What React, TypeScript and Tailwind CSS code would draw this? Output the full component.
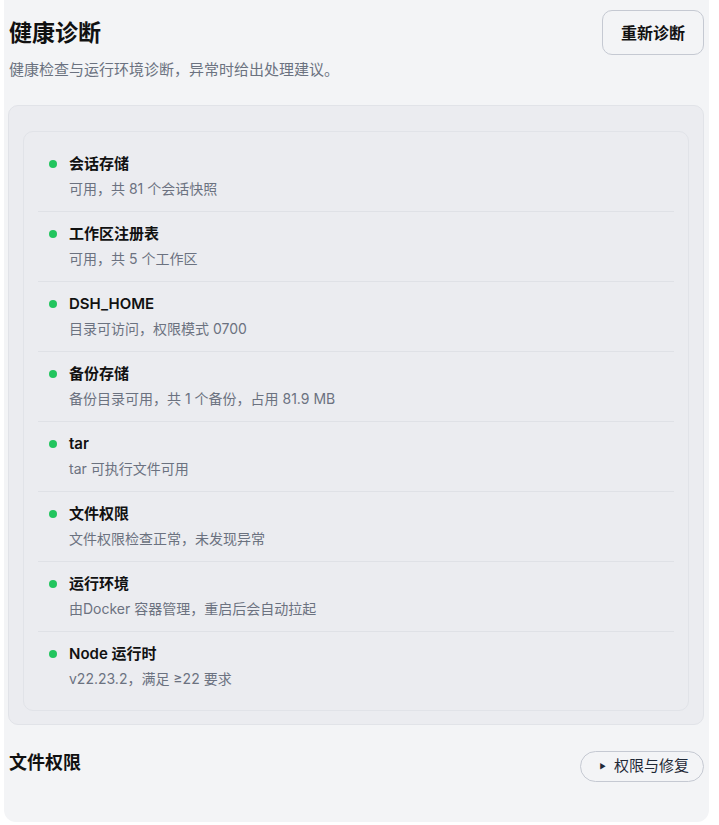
import React from 'react';

const checks = [
  { title: '会话存储', desc: '可用，共 81 个会话快照' },
  { title: '工作区注册表', desc: '可用，共 5 个工作区' },
  { title: 'DSH_HOME', desc: '目录可访问，权限模式 0700' },
  { title: '备份存储', desc: '备份目录可用，共 1 个备份，占用 81.9 MB' },
  { title: 'tar', desc: 'tar 可执行文件可用' },
  { title: '文件权限', desc: '文件权限检查正常，未发现异常' },
  { title: '运行环境', desc: '由Docker 容器管理，重启后会自动拉起' },
  { title: 'Node 运行时', desc: 'v22.23.2，满足 ≥22 要求' },
];

export default function App() {
  return (
    <div className="min-h-screen bg-white font-['Inter','Noto_Sans_CJK_SC',sans-serif] text-[#111827]">
      <div className="ml-[4px] mr-[10px] bg-[#f3f4f6] rounded-b-[12px] pl-[4px] pr-[5px] pt-[10px] pb-[40px]">
        {/* Header */}
        <div className="flex items-start justify-between">
          <div className="pl-[1px] pt-[6px]">
            <h1 className="text-[23px] leading-[34px] font-bold text-[#111]">健康诊断</h1>
            <p className="mt-[10px] text-[15px] leading-[20px] text-[#6b7280]">
              健康检查与运行环境诊断，异常时给出处理建议。
            </p>
          </div>
          <button className="h-[45px] w-[102px] rounded-[10px] border border-[#c5c9d2] bg-[#f3f4f6] text-[16px] font-semibold text-[#111]">
            重新诊断
          </button>
        </div>

        {/* Checks */}
        <div className="mt-[25px] rounded-[10px] border border-[#e1e3e8] bg-[#ebecf0] px-[14px] pt-[25px] pb-[13px]">
          <div className="rounded-[10px] border border-[#e1e3e8] px-[14px] py-[9px]">
            {checks.map((c, i) => (
              <div
                key={i}
                className={`flex pl-[11px] pb-[12px] ${i > 0 ? 'border-t border-[#dfe1e6] pt-[12px]' : 'pt-[13px]'}`}
              >
                <span className="mt-[6px] h-[8px] w-[8px] shrink-0 rounded-full bg-[#22c55e]" />
                <div className="ml-[12px]">
                  <div className="text-[15px] leading-[20px] font-semibold text-[#111]">{c.title}</div>
                  <div className="mt-[5px] text-[14px] leading-[20px] text-[#6b7280]">{c.desc}</div>
                </div>
              </div>
            ))}
          </div>
        </div>

        {/* File permissions */}
        <div className="mt-[26px] flex items-start justify-between">
          <h2 className="pl-[1px] text-[18px] leading-[24px] font-bold text-[#111]">文件权限</h2>
          <button className="flex h-[31px] items-center rounded-full border border-[#c5c9d2] pl-[19px] pr-[14px] text-[15px] text-[#1f2937]">
            <span className="mr-[8px] text-[7px] leading-none">▶</span>
            权限与修复
          </button>
        </div>
      </div>
    </div>
  );
}
